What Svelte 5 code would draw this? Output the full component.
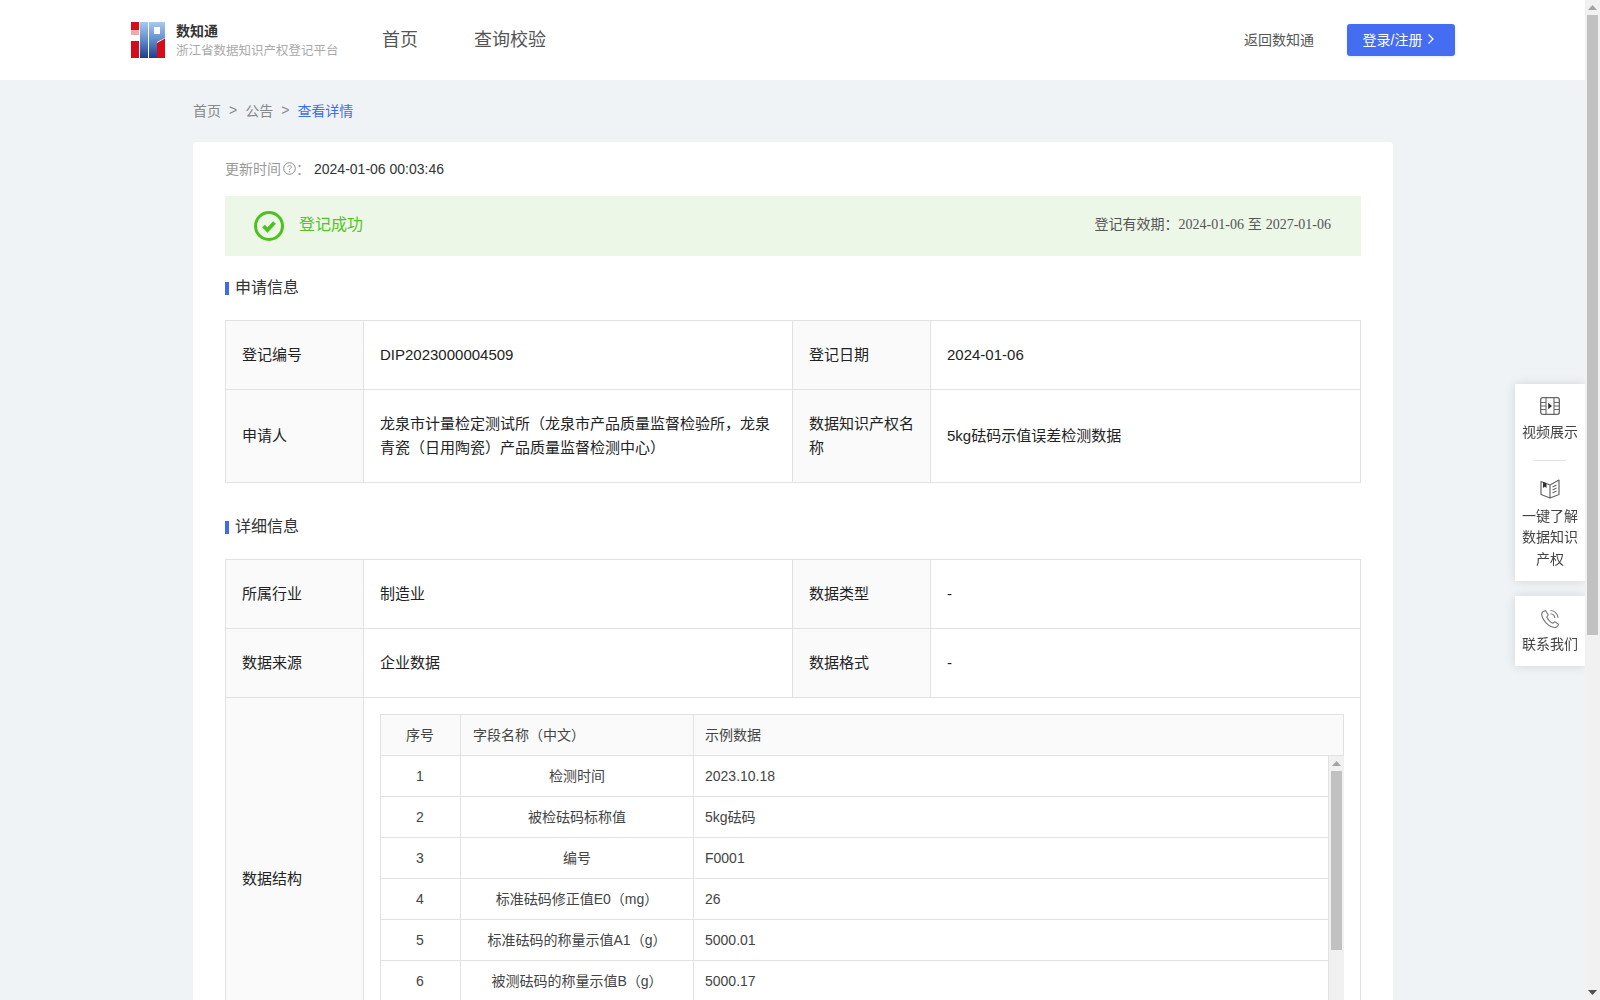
<script>
  const fields = [
    ['1', '检测时间', '2023.10.18'],
    ['2', '被检砝码标称值', '5kg砝码'],
    ['3', '编号', 'F0001'],
    ['4', '标准砝码修正值E0（mg）', '26'],
    ['5', '标准砝码的称量示值A1（g）', '5000.01'],
    ['6', '被测砝码的称量示值B（g）', '5000.17']
  ];
</script>

{#snippet scrollbar(thumb, upColor, downColor)}
  <div class="vbar" aria-hidden="true">
    <div class="vbar-btn">
      <svg width="9" height="5" viewBox="0 0 9 5"><path d="M4.500 0L9 5H0Z" fill={upColor} /></svg>
    </div>
    <div class="vbar-thumb" style="height: {thumb}px"></div>
    <div class="vbar-fill"></div>
    <div class="vbar-btn">
      <svg width="9" height="5" viewBox="0 0 9 5"><path d="M0 0H9L4.500 5Z" fill={downColor} /></svg>
    </div>
  </div>
{/snippet}

<div class="app">
  <div class="page">
    <header class="topbar">
      <div class="left">
        <div class="brand">
          <svg class="logo" width="34" height="36" viewBox="0 0 34 36" aria-hidden="true">
            <defs>
              <linearGradient id="lg" x1="0" y1="0" x2="0" y2="1">
                <stop offset="0" stop-color="#a9c9ee" />
                <stop offset="0.5" stop-color="#5f8dce" />
                <stop offset="1" stop-color="#1f3c8c" />
              </linearGradient>
            </defs>
            <rect x="0" y="0" width="8" height="8" fill="#d80c18" />
            <rect x="0" y="8" width="8" height="5" fill="#f3a9ad" />
            <rect x="0" y="19" width="8" height="17" fill="#d80c18" />
            <rect x="9" y="0" width="8" height="36" fill="url(#lg)" />
            <path d="M18 0H34V16L26 20V36H18Z" fill="url(#lg)" />
            <rect x="23" y="5" width="6" height="7" fill="#fff" />
            <path d="M26 21L34 16.500V36H26Z" fill="#d80c18" />
          </svg>
          <div class="brand-text">
            <div class="brand-name">数知通</div>
            <div class="brand-sub">浙江省数据知识产权登记平台</div>
          </div>
        </div>
        <nav class="nav">
          <span>首页</span>
          <span>查询校验</span>
        </nav>
      </div>
      <div class="right">
        <span class="back">返回数知通</span>
        <button class="login">
          登录/注册
          <svg width="8" height="12" viewBox="0 0 8 12" aria-hidden="true"><path d="M1.500 1.500L6 6L1.500 10.500" fill="none" stroke="#fff" stroke-width="1.300" /></svg>
        </button>
      </div>
    </header>

    <main class="main">
      <div class="crumbs">
        <span>首页</span><i>&gt;</i><span>公告</span><i>&gt;</i><span class="current">查看详情</span>
      </div>

      <section class="card">
        <div class="updated">
          <span class="muted">更新时间</span>
          <svg class="help" width="13" height="13" viewBox="0 0 13 13" aria-hidden="true">
            <circle cx="6.500" cy="6.500" r="5.800" fill="none" stroke="#8c8c8c" stroke-width="1" />
            <path d="M4.700 5.100C4.700 3 8.400 3 8.400 5.100C8.400 6.400 6.500 6.300 6.500 7.900" fill="none" stroke="#8c8c8c" stroke-width="1" />
            <circle cx="6.500" cy="9.700" r="0.700" fill="#8c8c8c" />
          </svg>
          <span class="muted colon">：</span>
          <span class="time">2024-01-06 00:03:46</span>
        </div>

        <div class="banner">
          <div class="status">
            <svg width="30" height="30" viewBox="0 0 30 30" aria-hidden="true">
              <circle cx="15" cy="15" r="13.500" fill="none" stroke="#4bc31c" stroke-width="3" />
              <path d="M9.500 15L13.500 19L20.500 11.500" fill="none" stroke="#4bc31c" stroke-width="3.800" />
            </svg>
            <span class="status-text">登记成功</span>
          </div>
          <div class="validity">登记有效期：<span class="serif">2024-01-06</span> 至 <span class="serif">2027-01-06</span></div>
        </div>

        <h2 class="title first">申请信息</h2>
        <table class="info">
          <colgroup><col class="c1" /><col class="c2" /><col class="c1" /><col /></colgroup>
          <tbody>
            <tr class="r69">
              <th>登记编号</th><td>DIP2023000004509</td>
              <th>登记日期</th><td>2024-01-06</td>
            </tr>
            <tr class="r93">
              <th>申请人</th><td>龙泉市计量检定测试所（龙泉市产品质量监督检验所，龙泉青瓷（日用陶瓷）产品质量监督检测中心）</td>
              <th>数据知识产权名称</th><td>5kg砝码示值误差检测数据</td>
            </tr>
          </tbody>
        </table>

        <h2 class="title second">详细信息</h2>
        <table class="info">
          <colgroup><col class="c1" /><col class="c2" /><col class="c1" /><col /></colgroup>
          <tbody>
            <tr class="r69">
              <th>所属行业</th><td>制造业</td>
              <th>数据类型</th><td>-</td>
            </tr>
            <tr class="r69">
              <th>数据来源</th><td>企业数据</td>
              <th>数据格式</th><td>-</td>
            </tr>
            <tr>
              <th>数据结构</th>
              <td colspan="3" class="structure">
                <div class="grid-head">
                  <div class="g1">序号</div>
                  <div class="g2">字段名称（中文）</div>
                  <div class="g3">示例数据</div>
                </div>
                <div class="grid-body">
                  <div class="grid-rows">
                    {#each fields as f}
                      <div class="grid-row">
                        <div class="g1">{f[0]}</div>
                        <div class="g2 centered">{f[1]}</div>
                        <div class="g3">{f[2]}</div>
                      </div>
                    {/each}
                  </div>
                  {@render scrollbar(179, '#a3a3a3', '#505050')}
                </div>
              </td>
            </tr>
          </tbody>
        </table>
      </section>
    </main>
  </div>

  {@render scrollbar(620, '#a3a3a3', '#505050')}

  <aside class="side">
    <div class="panel">
      <div class="side-item">
        <svg width="20" height="18" viewBox="0 0 20 18" aria-hidden="true">
          <rect x="0.700" y="0.700" width="18.600" height="16.600" rx="2" fill="none" stroke="#666" stroke-width="1.300" />
          <path d="M6 1V17M14 1V17M1 5.500H6M1 9H6M1 12.500H6M14 5.500H19M14 9H19M14 12.500H19" fill="none" stroke="#666" stroke-width="1.100" />
          <path d="M8.200 5.800L12 9L8.200 12.200Z" fill="#333" />
        </svg>
        <span>视频展示</span>
      </div>
      <div class="divider"></div>
      <div class="side-item">
        <svg width="20" height="20" viewBox="0 0 20 20" aria-hidden="true">
          <path d="M1 2.500L10 6V19L1 15.500Z M19 1L10 6V19L19 15.500Z" fill="none" stroke="#666" stroke-width="1.200" stroke-linejoin="round" />
          <path d="M3 2.800L6.500 4.200V9L4.800 7.800L3 9Z" fill="#333" />
          <path d="M12.500 8L16.500 6M12.500 11L16.500 9M12.500 14L16.500 12" fill="none" stroke="#666" stroke-width="1.100" />
        </svg>
        <span class="wrap">一键了解数据知识产权</span>
      </div>
    </div>
    <div class="panel compact">
      <div class="side-item">
        <svg width="20" height="20" viewBox="0 0 20 20" aria-hidden="true">
          <path d="M5.500 1.500L2.500 3C0.500 5 2.500 10 6 13.800C9.500 17.500 14 19.500 16.500 18C18 17 18.500 15.800 18.500 15.200L14.800 12.600L12.700 14.300C10.500 13.500 7.500 10 6.800 8L8.300 6Z" fill="none" stroke="#777" stroke-width="1.100" stroke-linejoin="round" />
          <path d="M10.500 1.500C14.500 1.800 17.500 4.800 18 8.800M10.500 4.800C12.800 5 14.500 6.800 14.800 9" fill="none" stroke="#777" stroke-width="1.100" />
        </svg>
        <span>联系我们</span>
      </div>
    </div>
  </aside>
</div>

<style>
  :global(body) {
    margin: 0;
    background: #eff3f6;
    font-family: "Liberation Sans", "Noto Sans CJK SC", sans-serif;
    font-size: 14px;
    color: #333;
    text-spacing-trim: space-all;
  }

  .app {
    display: flex;
    height: 100vh;
    overflow: hidden;
  }
  .page {
    flex: 1;
    min-width: 0;
    overflow: hidden;
    background: #eff3f6;
  }

  .vbar {
    flex: none;
    width: 15px;
    display: flex;
    flex-direction: column;
    background: #f1f1f1;
  }
  .vbar-btn {
    height: 15px;
    flex: none;
    display: flex;
    align-items: center;
    justify-content: center;
  }
  .vbar-btn svg {
    display: block;
  }
  .vbar-thumb {
    flex: none;
    margin: 0 2px;
    background: #c1c1c1;
  }
  .vbar-fill {
    flex: 1;
  }

  .topbar {
    height: 80px;
    background: #fff;
    display: flex;
    align-items: center;
    justify-content: space-between;
    padding: 0 130px 0 131px;
    box-sizing: border-box;
  }
  .left {
    display: flex;
    align-items: center;
  }
  .brand {
    display: flex;
    align-items: center;
    gap: 11px;
    width: 251px;
  }
  .logo {
    display: block;
    flex: none;
  }
  .brand-text {
    padding-top: 2px;
  }
  .brand-name {
    font-size: 14px;
    font-weight: 700;
    color: #333;
    line-height: 20px;
  }
  .brand-sub {
    font-size: 12.500px;
    color: #aaa;
    line-height: 20px;
    white-space: nowrap;
  }
  .nav {
    display: flex;
    gap: 56px;
    font-size: 18px;
    color: #555;
    padding-bottom: 4px;
  }
  .right {
    display: flex;
    align-items: center;
    gap: 33px;
  }
  .back {
    font-size: 14px;
    color: #555;
    padding-bottom: 3px;
  }
  .login {
    width: 108px;
    height: 32px;
    box-sizing: border-box;
    display: flex;
    align-items: center;
    justify-content: center;
    gap: 5px;
    border: 0;
    border-radius: 3px;
    background: #456df2;
    box-shadow: 0 1px 3px rgba(69, 109, 242, 0.15);
    color: #fff;
    font: inherit;
    font-size: 14px;
    padding: 0 4px 3px 0;
  }

  .main {
    width: 1200px;
    margin-left: 193px;
  }
  .crumbs {
    height: 62px;
    box-sizing: border-box;
    display: flex;
    align-items: center;
    color: #888;
    font-size: 14px;
    padding-bottom: 2px;
  }
  .crumbs i {
    font-style: normal;
    margin: 0 8px;
  }
  .current {
    color: #3b6ef0;
  }

  .card {
    background: #fff;
    border-radius: 4px;
    padding: 0 32px;
  }
  .updated {
    height: 54px;
    display: flex;
    align-items: baseline;
    padding-top: 16px;
    box-sizing: border-box;
  }
  .muted {
    color: #999;
  }
  .help {
    margin-left: 2px;
    flex: none;
    align-self: flex-start;
    margin-top: 4px;
  }
  .colon {
    margin-right: 4px;
  }
  .time {
    color: #333;
  }

  .banner {
    height: 60px;
    background: #ecf7e8;
    display: flex;
    align-items: center;
    justify-content: space-between;
    padding: 0 30px 0 29px;
  }
  .status {
    display: flex;
    align-items: center;
    gap: 15px;
    font-size: 16px;
    color: #52c41a;
  }
  .status svg {
    display: block;
  }
  .status-text {
    padding-bottom: 7px;
  }
  .validity {
    color: #555;
    font-size: 14px;
    padding-bottom: 7px;
  }
  .serif {
    font-family: "Liberation Serif", "Noto Sans CJK SC", serif;
  }

  .title {
    display: flex;
    align-items: center;
    gap: 6px;
    margin: 0;
    height: 22px;
    box-sizing: border-box;
    font-size: 16px;
    font-weight: 400;
    color: #333;
    padding-bottom: 2px;
  }
  .title::before {
    content: "";
    width: 4px;
    height: 13px;
    margin-top: 5px;
    background: #4169e8;
  }
  .title.first {
    margin: 20px 0 22px;
  }
  .title.second {
    margin: 32px 0 22px;
  }

  .info {
    width: 1136px;
    table-layout: fixed;
    border-collapse: collapse;
    color: #222;
    font-size: 15px;
    line-height: 24px;
  }
  .c1 {
    width: 138px;
  }
  .c2 {
    width: 429px;
  }
  .info > tbody > tr > th,
  .info > tbody > tr > td {
    border: 1px solid #e2e2e2;
    padding: 0 16px;
    text-align: left;
    font-weight: 400;
  }
  .info > tbody > tr > th {
    background: #fafafa;
  }
  .r69 {
    height: 69px;
  }
  .r93 {
    height: 93px;
  }
  .info > tbody > tr > td.structure {
    padding: 16px;
  }

  .grid-head,
  .grid-row {
    display: flex;
    color: #444;
    font-size: 14px;
    line-height: 40px;
  }
  .grid-head {
    background: #fafafa;
    border: 1px solid #e2e2e2;
    height: 40px;
  }
  .g1 {
    flex: none;
    width: 78px;
    padding-right: 1px;
    text-align: center;
    border-right: 1px solid #e2e2e2;
  }
  .g2 {
    flex: none;
    width: 208px;
    padding: 0 12px;
    border-right: 1px solid #e2e2e2;
  }
  .g2.centered {
    text-align: center;
  }
  .g3 {
    flex: 1;
    padding: 0 11px;
  }
  .grid-body {
    height: 287px;
    display: flex;
    border-left: 1px solid #e2e2e2;
  }
  .grid-rows {
    flex: 1;
    min-width: 0;
    overflow: hidden;
    border-right: 1px solid #e2e2e2;
  }
  .grid-row {
    height: 40px;
    border-bottom: 1px solid #e2e2e2;
  }

  .side {
    position: fixed;
    right: 15px;
    top: 384px;
    width: 70px;
    display: flex;
    flex-direction: column;
    gap: 15px;
    clip-path: inset(-20px 0 -20px -20px);
  }
  .panel {
    background: #fff;
    box-shadow: 0 0 10px rgba(0, 0, 0, 0.12);
    padding: 13px 0 11px;
  }
  .panel.compact {
    padding-bottom: 10.500px;
  }
  .side-item {
    display: flex;
    flex-direction: column;
    align-items: center;
    gap: 7px;
    font-size: 14px;
    line-height: 21.500px;
    color: #444;
    text-align: center;
  }
  .compact .side-item {
    gap: 5px;
  }
  .side-item svg {
    display: block;
  }
  .wrap {
    width: 56px;
  }
  .divider {
    width: 32px;
    height: 1px;
    background: #e2e2e2;
    margin: 16px auto 18px;
  }
</style>
